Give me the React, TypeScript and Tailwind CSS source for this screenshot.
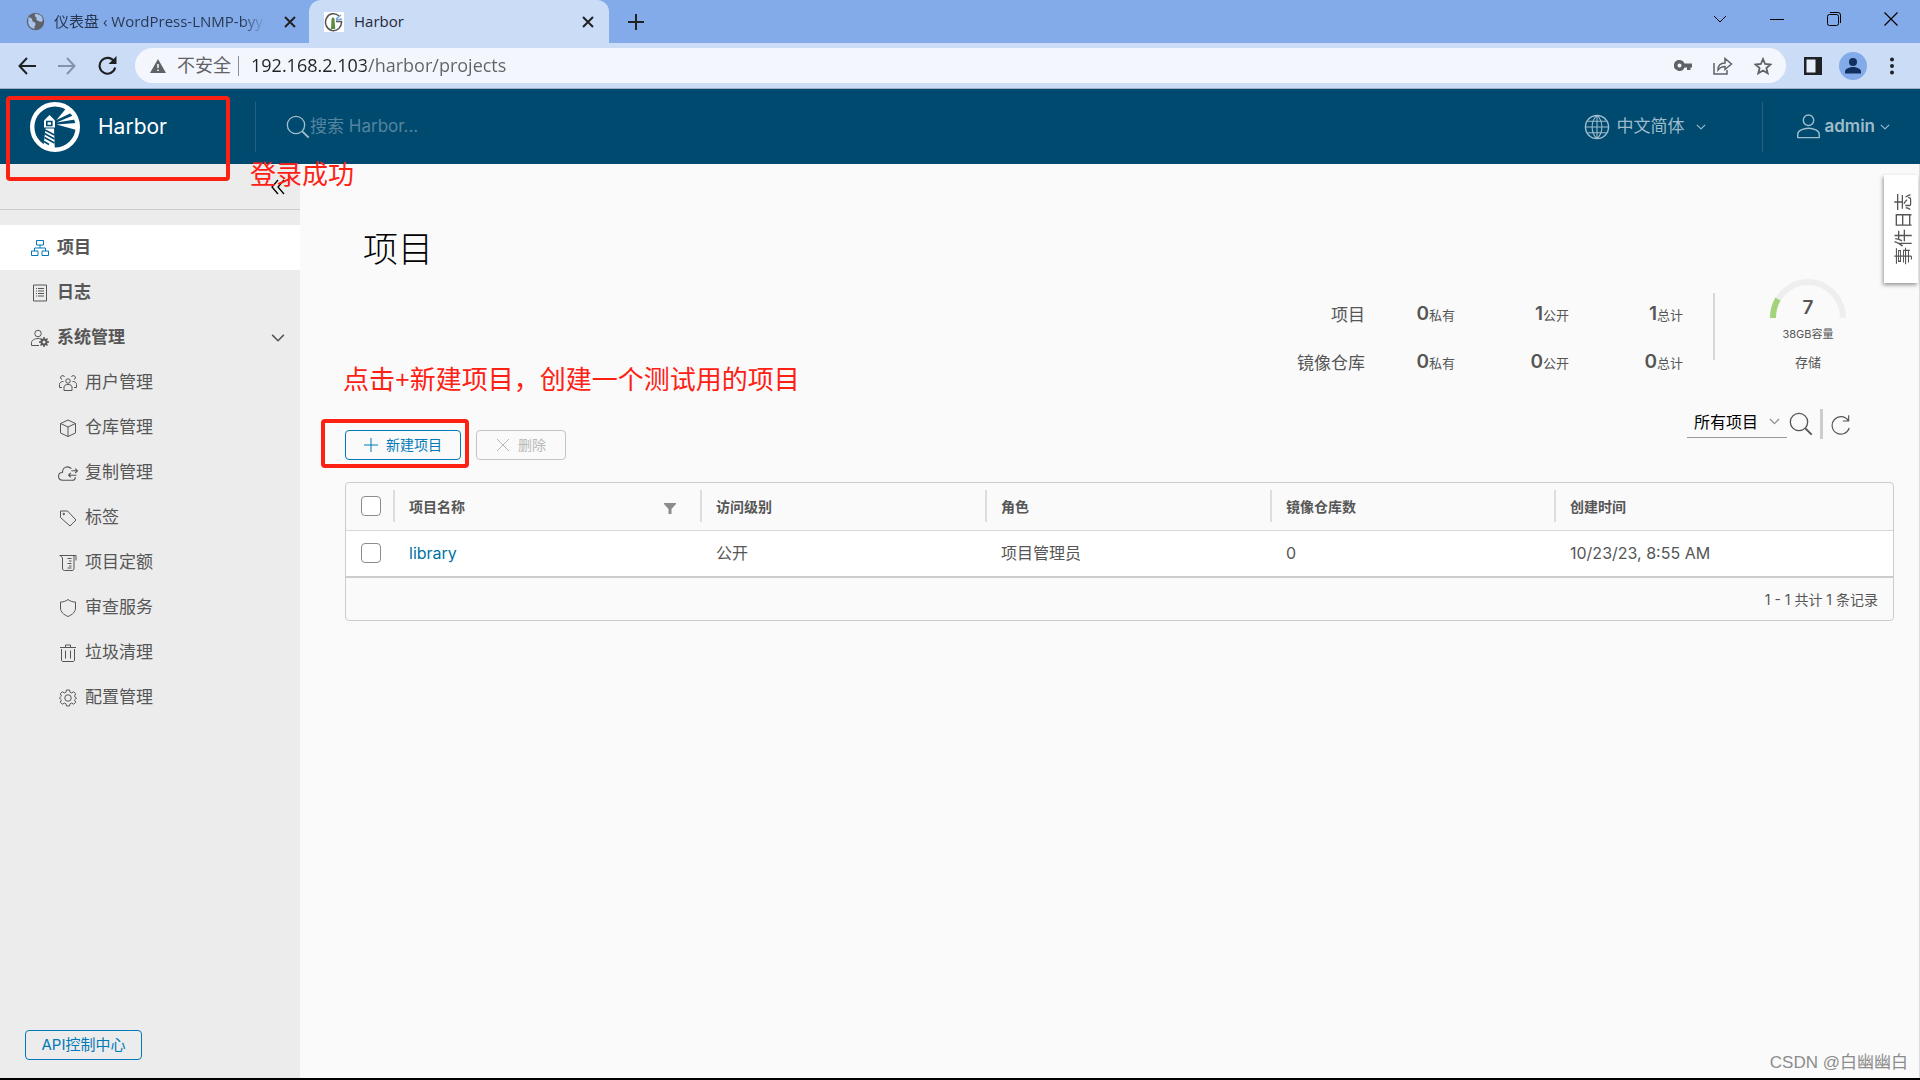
import type { ReactNode } from "react";

interface IconProps {
  className?: string;
  children: ReactNode;
}

function Icon({ className = "size-[18px]", children }: IconProps) {
  return (
    <svg
      viewBox="0 0 36 36"
      fill="none"
      stroke="currentColor"
      strokeWidth="2"
      strokeLinejoin="round"
      className={`shrink-0 ${className}`}
      aria-hidden="true"
    >
      {children}
    </svg>
  );
}

function Chevron({ className }: { className: string }) {
  return (
    <Icon className={className}>
      <path d="M3 10l15 15 15-15" strokeWidth="4" />
    </Icon>
  );
}

const GEAR =
  "M15 2h6l1.2 4.6 3 1.3 4.1-2.4 4.2 4.2-2.4 4.1 1.3 3L35 18v0l-2.6 3-1.3 1.2 2.4 4.1-4.2 4.2-4.1-2.4-3 1.3L21 34h-6l-1.2-4.6-3-1.3-4.1 2.4-4.2-4.2 2.4-4.1L3.6 21 1 18l2.6-3 1.3-1.2-2.4-4.1 4.2-4.2 4.1 2.4 3-1.3z";

const subItems = [
  {
    label: "用户管理",
    icon: (
      <Icon>
        <circle cx="18" cy="14" r="4.5" />
        <path d="M10 33v-7c0-3 3-5 8-5s8 2 8 5v7zM6 11a4 4 0 1 1 5-5M30 11a4 4 0 1 0-5-5M9 15c-5 0-8 2-8 6v6h5M27 15c5 0 8 2 8 6v6h-5" />
      </Icon>
    ),
  },
  {
    label: "仓库管理",
    icon: (
      <Icon>
        <path d="M18 2l15 7v19l-15 7-15-7V9zM3 9l15 7 15-7M18 16v19" />
      </Icon>
    ),
  },
  {
    label: "复制管理",
    icon: (
      <Icon className="-ml-px size-[20px]">
        <path d="M31 25v1c0 3-2 5-5 5H8c-4 0-7-3-7-7s3-7 7-7c0-6 4-10 9-10 3 0 5 1 7 3M24 14h11M31 10l4 4-4 4M33 22H19M23 18l-4 4 4 4" />
      </Icon>
    ),
  },
  {
    label: "标签",
    icon: (
      <Icon>
        <path d="M3 4h14l17 18-12 12L3 17z" />
        <circle cx="9.500" cy="10" r="1.500" fill="currentColor" />
      </Icon>
    ),
  },
  {
    label: "项目定额",
    icon: (
      <Icon>
        <path d="M1 3h33v10M2 3c4 2 5 4 5 7v18c0 3 1 5 4 5h15c3 0 4-2 4-5V3M17 9h8M20 14h5M17 19h8M20 24h5M17 28h8" />
      </Icon>
    ),
  },
  {
    label: "审查服务",
    icon: (
      <Icon>
        <path d="M18 1c5 4 10 5 15 5v12c0 8-6 13-15 17C9 31 3 26 3 18V6c5 0 10-1 15-5z" />
      </Icon>
    ),
  },
  {
    label: "垃圾清理",
    icon: (
      <Icon>
        <path d="M2 7h32M13 7V2h10v5M5 10v22c0 2 1 3 3 3h20c2 0 3-1 3-3V10M13 13v16M23 13v16" />
      </Icon>
    ),
  },
  {
    label: "配置管理",
    icon: (
      <Icon>
        <circle cx="18" cy="18" r="6.500" />
        <path d={GEAR} />
      </Icon>
    ),
  },
];

function CloseTab() {
  return (
    <button aria-label="关闭标签页" className="p-1">
      <svg viewBox="0 0 12 12" className="size-[12px]" stroke="#222" strokeWidth="2">
        <path d="M1 1l10 10M11 1L1 11" />
      </svg>
    </button>
  );
}

function BrowserTabs() {
  return (
    <div className="flex h-[43px] items-stretch bg-[#84abe9] text-[15px] text-[#1f2937]">
      <div className="flex w-[309px] items-center rounded-br-xl pl-[26px] pr-[9px]">
        <svg viewBox="0 0 24 24" className="mr-[9px] size-[19px] shrink-0" aria-hidden="true">
          <circle cx="12" cy="12" r="11" fill="#5f6368" />
          <path
            d="M3 7c4 0 5 2 5 4s4 1 4 4-2 2-1 6c-5 0-9-5-8-10zM12 2c-2 3 0 4 1 5s-1 3 2 4 3 2 5 1 1-6-2-8z"
            fill="#a9c3ef"
          />
        </svg>
        <span className="flex-1 whitespace-nowrap">
          <span className="bg-linear-to-r from-[#26364f] from-90% to-[#26364f]/10 bg-clip-text text-transparent">
            仪表盘 ‹ WordPress-LNMP-byy
          </span>
        </span>
        <CloseTab />
      </div>
      <div className="flex w-[300px] items-center rounded-t-xl bg-[#cbdcf7] pl-[15px] pr-[11px]">
        <svg viewBox="0 0 20 20" className="mr-[10px] size-[20px] shrink-0" aria-hidden="true">
          <path fill="#fff" d="M0 0h20v20H0z" />
          <path d="M15 4a8 8.500 0 1 0 2.500 5.500H12" fill="none" stroke="#555" strokeWidth="1.500" />
          <path d="M7.500 7l1.500-2 1.500 2 .7 10H7z" fill="#5b8c3e" />
          <path d="M12 7l5-4M12 8l6-1" stroke="#6fa3d8" strokeWidth="1.500" />
        </svg>
        <span className="flex-1">Harbor</span>
        <CloseTab />
      </div>
      <button aria-label="新标签页" className="ml-[19px]">
        <svg viewBox="0 0 16 16" className="size-4" stroke="#222" strokeWidth="2">
          <path d="M8 0v16M0 8h16" />
        </svg>
      </button>
      <div className="ml-auto flex items-center gap-[43px] pb-[6px] pr-[22px] text-black">
        <button aria-label="搜索标签页">
          <svg viewBox="0 0 14 14" className="size-[14px]" fill="none" stroke="currentColor">
            <path d="M1 4l6 6 6-6" />
          </svg>
        </button>
        <button aria-label="最小化">
          <svg viewBox="0 0 14 14" className="size-[14px]" stroke="currentColor">
            <path d="M0 7.500h14" />
          </svg>
        </button>
        <button aria-label="还原">
          <svg viewBox="0 0 14 14" className="size-[14px]" fill="none" stroke="currentColor">
            <rect x=".5" y="2.500" width="11" height="11" rx="2" />
            <path d="M3 .5h8a2.500 2.500 0 0 1 2.500 2.500v8" />
          </svg>
        </button>
        <button aria-label="关闭">
          <svg viewBox="0 0 14 14" className="size-[14px]" stroke="currentColor" strokeWidth="1.200">
            <path d="M.5.5l13 13M13.500.5l-13 13" />
          </svg>
        </button>
      </div>
    </div>
  );
}

function AddressBar() {
  return (
    <div className="flex h-[46px] items-center border-b border-[#9fadc5] bg-[#cbdcf7] pl-[18px] pr-6 text-[#1f2023]">
      <button aria-label="后退">
        <svg viewBox="0 0 18 18" className="size-[18px]" fill="none" stroke="currentColor" strokeWidth="2">
          <path d="M18 9H2M9 1L1.500 9 9 17" />
        </svg>
      </button>
      <button aria-label="前进" className="ml-[22px] text-[#8592aa]">
        <svg viewBox="0 0 18 18" className="size-[18px]" fill="none" stroke="currentColor" strokeWidth="2">
          <path d="M0 9h16M9 1l7.500 8L9 17" />
        </svg>
      </button>
      <button aria-label="重新加载" className="ml-[22px]">
        <svg viewBox="0 0 18 18" className="size-[19px]" fill="none" stroke="currentColor" strokeWidth="2">
          <path d="M15.500 5.500A7.500 7.500 0 1 0 16.300 11" />
          <path d="M17.500 0v7.500H10z" fill="currentColor" stroke="none" />
        </svg>
      </button>
      <div className="ml-[18px] flex h-[35px] flex-1 items-center rounded-full bg-[#f3f7fd] pl-[15px] pr-[14px] text-[18px] text-[#5f6368]">
        <svg viewBox="0 0 16 14" className="mr-[11px] h-[14px] w-4" aria-hidden="true">
          <path d="M8 0l8 14H0z" fill="#5f6368" />
          <path d="M8 5v4M8 10.500v1.500" stroke="#fff" strokeWidth="1.500" />
        </svg>
        <span>不安全</span>
        <span className="ml-[7px] h-5 w-px bg-[#8a8f96]" />
        <input
          aria-label="地址"
          defaultValue="192.168.2.103/harbor/projects"
          className="ml-3 min-w-0 flex-1 bg-linear-to-r from-[#202124] from-[115px] to-[#5f6368] to-[115px] bg-clip-text text-transparent caret-black outline-none"
        />
        <div className="flex items-center gap-[21px]">
          <button aria-label="密码">
            <svg viewBox="0 0 18 12" className="h-3 w-[18px]" fill="#5f6368">
              <path
                fillRule="evenodd"
                d="M5.500 0a5.500 5.500 0 0 1 5 3.500H18v4h-1.500V10H13V7.500h-2.500a5.500 5.500 0 1 1-5-7.500zm0 3.500a2 2 0 1 0 0 4 2 2 0 0 0 0-4z"
              />
            </svg>
          </button>
          <button aria-label="分享">
            <svg viewBox="0 0 20 18" className="h-[18px] w-5" fill="none" stroke="#5f6368" strokeWidth="1.500">
              <path d="M1 6v11h13v-4M5 13c0-5 3-7 7-7V1.500L18.500 7 12 12.500V9.500c-3 0-5 1-7 3.500z" />
            </svg>
          </button>
          <button aria-label="收藏">
            <svg viewBox="0 0 18 18" className="size-[18px]" fill="none" stroke="#5f6368" strokeWidth="1.800">
              <path d="M9 2l2.100 5 5.400.5-4.100 3.500 1.300 5.300L9 13.500l-4.700 2.800L5.600 11 1.500 7.500 6.900 7z" />
            </svg>
          </button>
        </div>
      </div>
      <button aria-label="侧边栏" className="ml-[18px]">
        <svg viewBox="0 0 18 18" className="size-[18px]">
          <path d="M0 0h18v18H0z" fill="#202124" />
          <path d="M2.500 2.500h9v13h-9z" fill="#e8effb" />
        </svg>
      </button>
      <button aria-label="用户" className="ml-[17px]">
        <svg viewBox="0 0 28 28" className="size-[28px]">
          <circle cx="14" cy="14" r="14" fill="#84abe9" />
          <circle cx="14" cy="10" r="4" fill="#12305f" />
          <path d="M6 21.500v-2c0-3 5-4.500 8-4.500s8 1.500 8 4.500v2z" fill="#12305f" />
        </svg>
      </button>
      <button aria-label="菜单" className="ml-[21px]">
        <svg viewBox="0 0 8 18" className="h-[18px] w-2" fill="#202124">
          <circle cx="4" cy="2.500" r="2" />
          <circle cx="4" cy="9" r="2" />
          <circle cx="4" cy="15.500" r="2" />
        </svg>
      </button>
    </div>
  );
}

function HarborLogo() {
  return (
    <svg viewBox="0 0 50 50" className="size-[50px] shrink-0" aria-hidden="true">
      <circle cx="25" cy="25" r="22.800" fill="none" stroke="#fff" strokeWidth="4.400" />
      <path d="M14 18.500l5.500-5.500 5.500 5.500v7H14z" fill="#fff" />
      <path d="M16.800 19.500h5v4h-5z" fill="none" stroke="#004a70" strokeWidth="1.600" />
      <path d="M15.500 26.500H24l.8 20.500c-4 0-8-1-11.300-3z" fill="#fff" />
      <path
        d="M15 28l9.500 5M14.500 31.500l10 5.500M14.500 35.500l10 5.500M14 39.500l5 3"
        stroke="#004a70"
        strokeWidth="1.500"
      />
      <path d="M26.500 18L36 6.500l5 4.500zM26.500 20.500L43 13.500l2 4zM26.500 22.500l20-1.500v7z" fill="#fff" />
    </svg>
  );
}

function Header() {
  return (
    <header className="flex h-[75px] items-center bg-[#004a70] text-[#9fbccb]">
      <a href="#" className="flex w-[255px] items-center gap-[18px] pl-[30px] text-[21px] leading-7 text-white">
        <HarborLogo />
        Harbor
      </a>
      <div className="flex h-[50px] flex-1 items-center border-l border-[#24627f] pl-[30px]">
        <Icon className="size-[24px]">
          <circle cx="15" cy="15" r="13" />
          <path d="M24.500 24.500L34 34" strokeWidth="3" />
        </Icon>
        <input
          aria-label="搜索 Harbor"
          placeholder="搜索 Harbor..."
          className="w-64 bg-transparent pt-px text-[17px] outline-none placeholder:text-[#55859e]"
        />
      </div>
      <button className="flex items-center pr-[56px] text-[17px]">
        <Icon className="mr-[6px] size-[26px]">
          <circle cx="18" cy="18" r="16" />
          <path d="M2 18h32M18 2v32M5 10h26M5 26h26M18 2c-9 8-9 24 0 32M18 2c9 8 9 24 0 32" strokeWidth="1.500" />
        </Icon>
        中文简体
        <Chevron className="ml-3 size-[10px]" />
      </button>
      <button className="flex h-[50px] items-center border-l border-[#24627f] pl-[33px] pr-[30px] text-[17px] font-semibold">
        <Icon className="mr-[3px] size-[25px]">
          <circle cx="18" cy="9" r="7.500" />
          <path d="M2.500 34v-5c0-5 8-8.500 15.500-8.500S33.500 24 33.500 29v5z" />
        </Icon>
        admin
        <Chevron className="ml-[5px] size-[10px]" />
      </button>
    </header>
  );
}

function Sidebar() {
  return (
    <aside className="flex w-[300px] shrink-0 flex-col bg-[#ececec] text-[17px] text-[#565656]">
      <div className="mb-[15px] flex h-[46px] items-center justify-end border-b border-[#ccc] pr-[14px]">
        <button aria-label="收起菜单" className="text-black">
          <svg viewBox="0 0 16 16" className="size-4" fill="none" stroke="currentColor" strokeWidth="1.300">
            <path d="M8 1L2 8l6 7M14 1L8 8l6 7" />
          </svg>
        </button>
      </div>
      <nav>
        <a href="#" className="flex h-[45px] items-center gap-2 bg-white pl-[31px] font-bold">
          <Icon className="size-[18px] text-[#0079b8]">
            <path d="M11 3h14v9H11zM1 24h13v9H1zM22 24h13v9H22zM18 12v6M7 24v-6h22v6" />
          </Icon>
          项目
        </a>
        <a href="#" className="flex h-[45px] items-center gap-2 pl-[31px] font-bold">
          <Icon>
            <path d="M5 2h26v32H5zM10 9h2M10 14h2M10 19h2M10 24h2M14 9h12M14 14h12M14 19h12M14 24h12" />
          </Icon>
          日志
        </a>
        <button className="flex h-[45px] w-full items-center gap-2 pl-[31px] pr-[15px] font-bold">
          <Icon>
            <circle cx="14" cy="9" r="6.500" />
            <path d="M16 33H1v-6c0-4 6-8 13-8 2 0 3 0 5 1" />
            <circle cx="26" cy="26" r="5" strokeWidth="4" />
            <path d="M26 16v4M26 32v4M16 26h4M32 26h4M19 19l3 3M30 30l3 3M33 19l-3 3M22 30l-3 3" strokeWidth="3" />
          </Icon>
          <span className="flex-1 text-left">系统管理</span>
          <Chevron className="size-[14px]" />
        </button>
        {subItems.map((item) => (
          <a key={item.label} href="#" className="flex h-[45px] items-center pl-[59px]">
            <span className="w-[26px]">{item.icon}</span>
            {item.label}
          </a>
        ))}
      </nav>
      <button className="mb-[18px] ml-[25px] mt-auto h-[30px] w-[117px] rounded border border-[#0079b8] text-[15px] leading-[26px] text-[#0079b8]">
        API控制中心
      </button>
    </aside>
  );
}

function Stat({ value, label }: { value: number; label: string }) {
  return (
    <span className="flex items-baseline justify-end">
      <b className="text-[19px] font-semibold">{value}</b>
      <span className="text-[13px]">{label}</span>
    </span>
  );
}

function Summary() {
  return (
    <div className="flex justify-end pr-12">
      <div className="mt-[14px] grid h-[67px] grid-cols-[100px_90px_114px_114px] content-start gap-y-[23px] border-r-2 border-[#d7d7d7] pr-[30px] pt-[9px] text-right text-[17px] leading-6">
        <span className="pt-px">项目</span>
        <Stat value={0} label="私有" />
        <Stat value={1} label="公开" />
        <Stat value={1} label="总计" />
        <span className="pt-px">镜像仓库</span>
        <Stat value={0} label="私有" />
        <Stat value={0} label="公开" />
        <Stat value={0} label="总计" />
      </div>
      <div className="ml-[55px] flex w-[76px] flex-col items-center">
        <div className="relative h-[39px] w-full">
          <svg viewBox="0 0 76 39" className="h-full w-full" fill="none" strokeWidth="6">
            <path d="M3 39a35 36 0 0 1 70 0" stroke="#eee" />
            <path d="M3 39a35 36 0 0 1 5-19" stroke="#a3d47c" />
          </svg>
          <b className="absolute inset-x-0 bottom-0 text-center text-[19px] font-semibold leading-5">7</b>
        </div>
        <span className="mt-2 text-[11px] leading-4">38GB容量</span>
        <span className="mt-3 text-[13px] leading-4">存储</span>
      </div>
    </div>
  );
}

function Toolbar() {
  return (
    <div className="flex items-start">
      <div className="mt-[21px] flex gap-[15px] text-[14px]">
        <button className="flex h-[30px] w-[116px] items-center justify-center gap-2 rounded border border-[#0079b8] text-[#0079b8]">
          <svg viewBox="0 0 14 14" className="size-[14px]" stroke="currentColor">
            <path d="M7 0v14M0 7h14" />
          </svg>
          <span className="leading-[26px]">新建项目</span>
        </button>
        <button
          disabled
          className="flex h-[30px] w-[90px] items-center justify-center gap-2 rounded border border-[#c4c4c4] text-[#b8b8b8]"
        >
          <svg viewBox="0 0 14 14" className="size-[14px]" stroke="currentColor">
            <path d="M1 1l12 12M13 1L1 13" />
          </svg>
          <span className="leading-[26px]">删除</span>
        </button>
      </div>
      <div className="ml-auto flex items-center pr-[43px]">
        <div className="flex h-[28px] w-[100px] items-center border-b border-[#9a9a9a] px-[7px]">
          <select
            aria-label="项目筛选"
            className="min-w-0 flex-1 appearance-none bg-transparent pb-1 text-[16px] text-black outline-none"
          >
            <option>所有项目</option>
          </select>
          <Chevron className="mb-1 size-[11px] text-[#8c8c8c]" />
        </div>
        <button aria-label="搜索" className="ml-[2px]">
          <Icon className="size-[24px]">
            <circle cx="15" cy="15" r="13" />
            <path d="M24.500 24.500L34 34" strokeWidth="3" />
          </Icon>
        </button>
        <span className="ml-[7px] h-[30px] w-[3px] bg-[#ccc]" />
        <button aria-label="刷新" className="ml-[7px]">
          <Icon className="size-[21px]">
            <path d="M31 11A15 15 0 1 0 33 24M32 2v10h-10" />
          </Icon>
        </button>
      </div>
    </div>
  );
}

function Checkbox({ label }: { label: string }) {
  return (
    <input
      type="checkbox"
      aria-label={label}
      className="block size-5 appearance-none rounded border border-[#8c8c8c] bg-white"
    />
  );
}

function HeadCell({ children }: { children: ReactNode }) {
  return (
    <th className="h-[47px] p-0 text-left font-bold">
      <div className="flex h-[32px] items-center border-l-2 border-[#ddd] pl-[14px] pr-6">{children}</div>
    </th>
  );
}

function ProjectTable() {
  return (
    <div className="mt-[22px] rounded border border-[#ccc] text-[#565656]">
      <table className="w-full table-fixed border-collapse text-[16px]">
        <colgroup>
          <col className="w-[47px]" />
          <col className="w-[307px]" />
          <col className="w-[285px]" />
          <col className="w-[285px]" />
          <col className="w-[284px]" />
          <col />
        </colgroup>
        <thead className="text-[14px]">
          <tr className="border-b border-[#d7d7d7]">
            <th className="p-0 pl-[15px]">
              <Checkbox label="全选" />
            </th>
            <th className="h-[47px] p-0 text-left font-bold">
              <div className="flex h-[32px] items-center justify-between border-l-2 border-[#ddd] pl-[14px] pr-6">
                项目名称
                <button aria-label="筛选" className="pt-1">
                  <svg viewBox="0 0 12 12" className="size-3" fill="#8c8c8c">
                    <path d="M0 1h12v1L7.500 7v5h-3V7L0 2z" />
                  </svg>
                </button>
              </div>
            </th>
            <HeadCell>访问级别</HeadCell>
            <HeadCell>角色</HeadCell>
            <HeadCell>镜像仓库数</HeadCell>
            <HeadCell>创建时间</HeadCell>
          </tr>
        </thead>
        <tbody>
          <tr className="h-[47px] border-b-2 border-[#ccc] bg-white">
            <td className="pl-[15px]">
              <Checkbox label="选择 library" />
            </td>
            <td className="pl-4">
              <a href="#" className="text-[#0072a3]">
                library
              </a>
            </td>
            <td className="pl-4">公开</td>
            <td className="pl-4">项目管理员</td>
            <td className="pl-4">0</td>
            <td className="pl-4">10/23/23, 8:55 AM</td>
          </tr>
        </tbody>
      </table>
      <div className="flex h-[42px] items-center justify-end pr-[15px] text-[14px]">1 - 1 共计 1 条记录</div>
    </div>
  );
}

export default function App() {
  return (
    <div className="relative flex min-h-screen flex-col border-b-2 border-black bg-[#fafafa] font-['Open_Sans','Noto_Sans_CJK_SC',sans-serif]">
      <BrowserTabs />
      <AddressBar />
      <div className="flex flex-1 flex-col font-['Inter','Noto_Sans_CJK_SC',sans-serif]">
        <Header />
        <div className="flex flex-1">
          <Sidebar />
          <main className="min-w-0 flex-1 border-r border-[#ddd] pl-[45px] pr-[25px] text-[#565656]">
            <h1 className="ml-[18px] pt-[60px] text-[35px] font-light leading-[50px] text-black">项目</h1>
            <div className="mt-[5px]">
              <Summary />
            </div>
            <div className="mt-[39px]">
              <Toolbar />
            </div>
            <ProjectTable />
          </main>
        </div>
      </div>

      <button className="absolute right-[2px] top-[175px] flex h-[108px] w-[34px] items-center justify-center bg-white pl-1 text-[18px] text-[#565656] shadow-[-1px_2px_4px_rgba(0,0,0,0.4)]">
        <span className="rotate-180 whitespace-nowrap [text-orientation:sideways] [writing-mode:vertical-rl]">
          事件日志
        </span>
      </button>
      <div className="absolute left-[6px] top-[96px] h-[85px] w-[224px] rounded border-4 border-[#ff2014]" />
      <p className="absolute left-[250px] top-[154px] text-[26px] leading-10 text-[#ff2014]">登录成功</p>
      <p className="absolute left-[343px] top-[359px] text-[26px] leading-10 text-[#ff2014]">
        点击+新建项目，创建一个测试用的项目
      </p>
      <div className="absolute left-[321px] top-[419px] h-[49px] w-[148px] rounded border-4 border-[#ff2014]" />
      <p className="absolute bottom-[3px] right-[12px] font-['Liberation_Sans','Noto_Sans_CJK_SC',sans-serif] text-[17px] text-[#8c8c8c]">
        CSDN @白幽幽白
      </p>
    </div>
  );
}
